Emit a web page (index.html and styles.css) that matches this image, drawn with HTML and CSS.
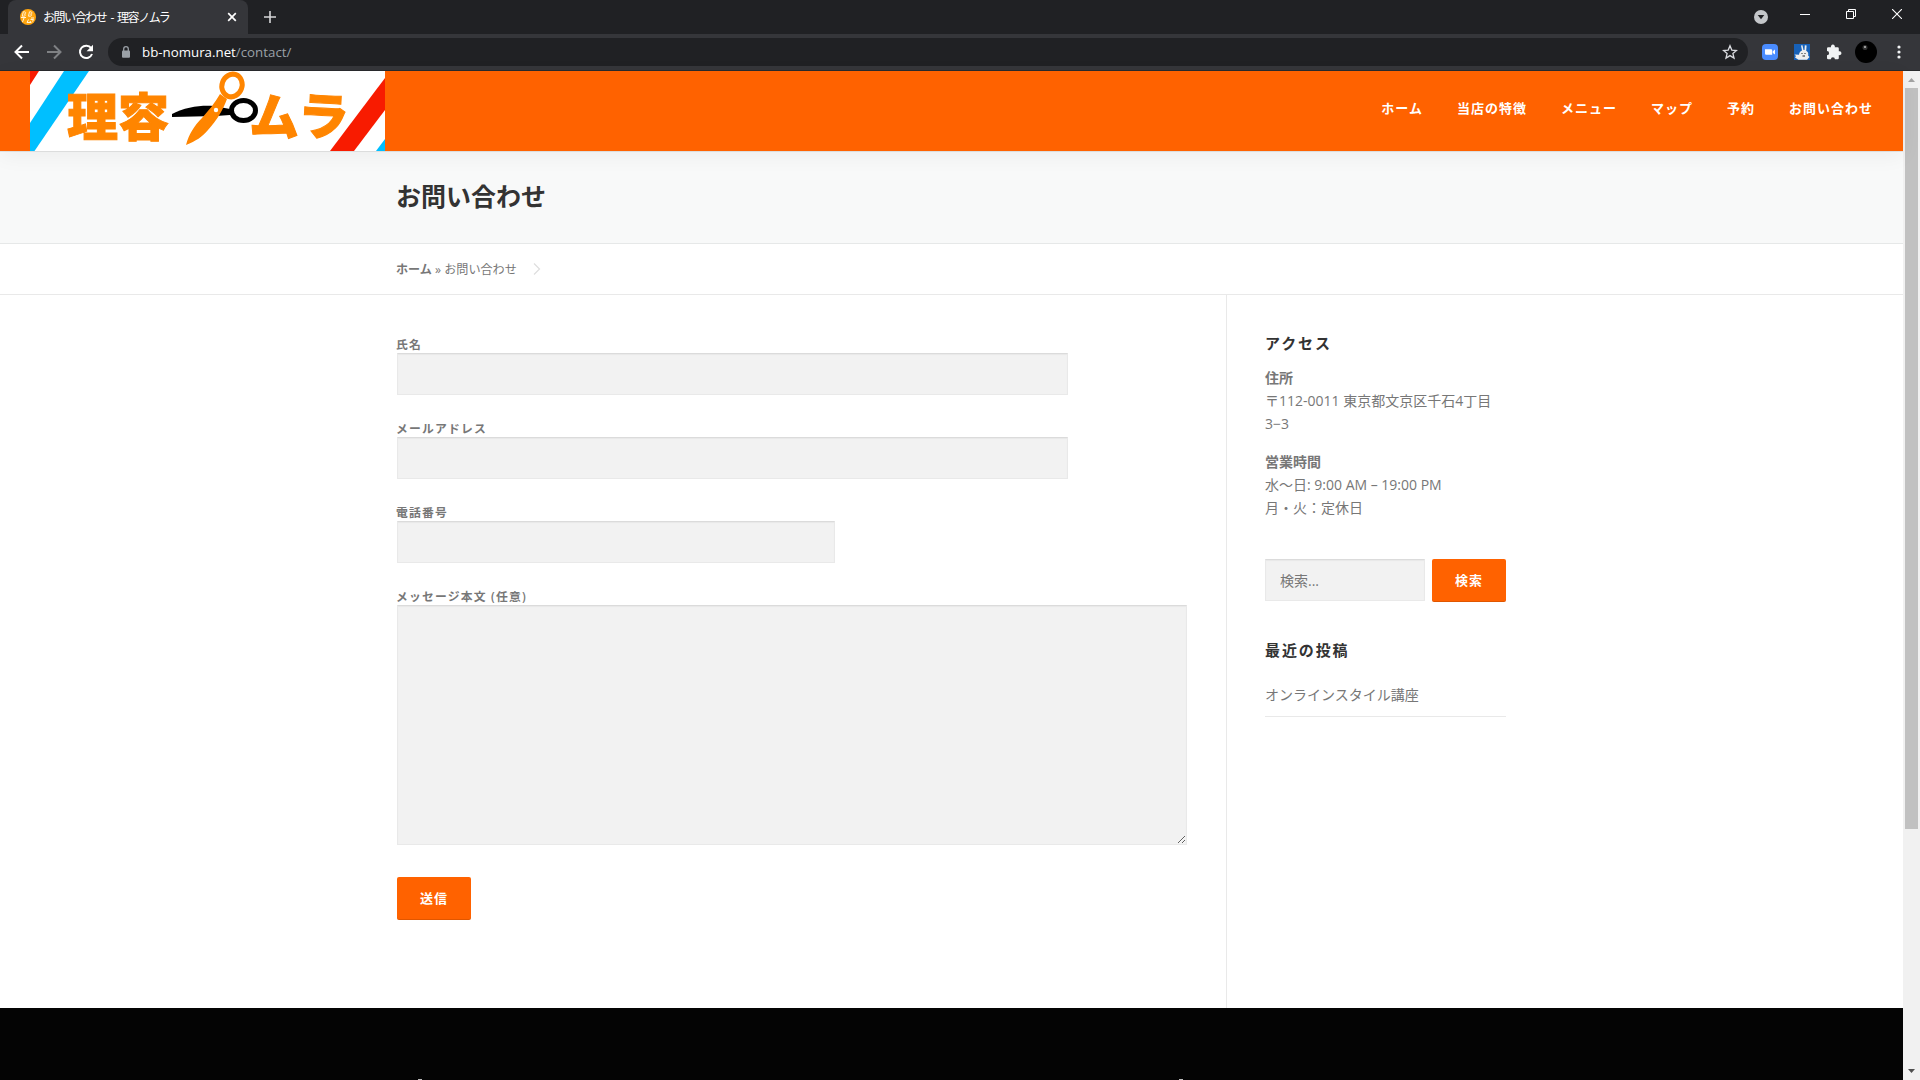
FILE: index.html
```html
<!DOCTYPE html>
<html lang="ja">
<head>
<meta charset="utf-8">
<title>お問い合わせ - 理容ノムラ</title>
<link rel="stylesheet" href="styles.css">
</head>
<body>
<div class="browser">
  <div class="tabstrip">
    <div class="tab">
      <svg class="favicon" width="16" height="16" viewBox="0 0 16 16"><circle cx="8" cy="8" r="8" fill="#ffa50f"/><g fill="none" stroke="#fff3d8" stroke-width="1"><path d="M3.300 2.800l-1 4.400h1.500c2 0 1.800-2 .6-2.100 1.700 0 1.700-2.200.2-2.300zM9.500 2.800l-1 4.400H10c2 0 1.800-2 .6-2.100 1.700 0 1.700-2.200.2-2.300z"/><path d="M1 8.500h5M4 9l-1.500 4M8.500 10.500L7 13.500h4M10 12l1.200 2M11 9h3M10.500 10.500h3l-1 2"/></g></svg>
      <span class="tab-title">お問い合わせ - 理容ノムラ</span>
      <svg class="tab-close" width="10" height="10" viewBox="0 0 10 10"><path d="M1.200 1.200l7.600 7.600M8.800 1.200L1.200 8.800" stroke="#fff" stroke-width="1.700"/></svg>
    </div>
    <svg class="new-tab" width="12" height="12" viewBox="0 0 12 12"><path d="M6 0v12M0 6h12" stroke="#d5d6d8" stroke-width="1.600"/></svg>
    <div class="window-controls">
      <svg width="14" height="14" viewBox="0 0 14 14"><circle cx="7" cy="7" r="7" fill="#c4c7ca"/><path d="M3.700 5h6.600L7 9.300z" fill="#202124"/></svg>
      <svg width="10" height="10" viewBox="0 0 10 10"><path d="M0 5.500h10" stroke="#fff"/></svg>
      <svg width="10" height="10" viewBox="0 0 10 10"><path d="M.5 2.500h7v7h-7zM2.500 2.500v-2h7v7h-2" fill="none" stroke="#fff"/></svg>
      <svg width="10" height="10" viewBox="0 0 10 10"><path d="M0 0l10 10M10 0L0 10" stroke="#fff" stroke-width="1.100"/></svg>
    </div>
  </div>
  <div class="toolbar">
    <div class="nav-buttons">
      <svg width="16" height="16" viewBox="0 0 16 16"><path d="M15 8H2M8 1.500L1.500 8 8 14.500" fill="none" stroke="#fff" stroke-width="2"/></svg>
      <svg width="16" height="16" viewBox="0 0 16 16"><path d="M1 8h13M8 1.500L14.500 8 8 14.500" fill="none" stroke="#7f8184" stroke-width="2"/></svg>
      <svg width="16" height="16" viewBox="0 0 16 16"><path d="M13.200 4.200A6.200 6.200 0 1 0 14 10" fill="none" stroke="#fff" stroke-width="2"/><path d="M15 .8v6.400H8.600z" fill="#fff"/></svg>
    </div>
    <div class="address">
      <svg width="10" height="12" viewBox="0 0 10 12"><rect x="1" y="4.500" width="8" height="7.300" rx="1" fill="#9aa0a6"/><path d="M2.700 5V3a2.300 2.300 0 0 1 4.600 0v2" fill="none" stroke="#9aa0a6" stroke-width="1.300"/></svg>
      <span class="url">bb-nomura.net<span class="url-path">/contact/</span></span>
      <svg class="star" width="16" height="16" viewBox="0 0 16 16"><path d="M8 1.800l1.800 4.300 4.700.4-3.600 3 1.100 4.600L8 11.600l-4 2.500 1.100-4.600-3.600-3 4.700-.4z" fill="none" stroke="#dadce0" stroke-width="1.300"/></svg>
    </div>
    <div class="extensions">
      <svg width="16" height="16" viewBox="0 0 16 16"><rect width="16" height="16" rx="4" fill="#4a8cff"/><path d="M3 5.200h6a1.200 1.200 0 0 1 1.200 1.200v4.400H4.200A1.200 1.200 0 0 1 3 9.600zM10.800 7.200L13 5.500v5l-2.200-1.600z" fill="#fff"/></svg>
      <svg width="16" height="16" viewBox="0 0 16 16"><rect width="16" height="16" fill="#1761b8"/><path d="M7 1.500l1.500-.3 1 4.800 1-.1.300-4.700 1.800.3-.4 5.300c2 1 2.400 3 1.900 4.700L15.500 13l-2.500 2.700H4.500L1 13.500l1-1.500-1.500-1.500 4.500.3c.2-2 1-3.500 3-4.300z" fill="#eee"/><path d="M8 9v1M11 9v1M8.500 12h2.500" stroke="#222"/></svg>
      <svg width="16" height="16" viewBox="0 0 16 16"><path d="M1 4.400A1.200 1.200 0 0 1 2.200 3.200H5a2 2 0 1 1 3.800 0h2.800a1.200 1.200 0 0 1 1.200 1.200v2.900a2 2 0 1 1 0 3.800v2.900a1.200 1.200 0 0 1-1.200 1.200H8.900a2 2 0 0 0-4 0H2.200A1.200 1.200 0 0 1 1 14v-2.700a2.100 2.100 0 0 0 0-4.200z" fill="#f1f3f4"/></svg>
      <svg class="avatar" width="22" height="22" viewBox="0 0 22 22"><circle cx="11" cy="11" r="11" fill="#000"/><circle cx="10" cy="6.500" r="2.500" fill="#333"/><circle cx="10" cy="6" r="1" fill="#bbb"/></svg>
      <svg class="kebab" width="4" height="14" viewBox="0 0 4 14"><g fill="#f1f3f4"><circle cx="2" cy="2" r="1.600"/><circle cx="2" cy="7" r="1.600"/><circle cx="2" cy="12" r="1.600"/></g></svg>
    </div>
  </div>
</div>

<div class="viewport">
  <div class="page">
    <header class="site-header">
      <svg class="logo" width="355" height="80" viewBox="0 0 355 80">
        <rect width="355" height="80" fill="#fff"/>
        <path d="M0 0h9L0 14z" fill="#f81b00"/>
        <path d="M34 0h25L4.500 80H0V52z" fill="#00bfff"/>
        <path d="M355 7v32L324 80h-24z" fill="#f81b00"/>
        <path d="M355 68v12h-9z" fill="#00bfff"/>
        <g class="logo-text">
          <text x="37" y="65" font-size="51" textLength="102">理容</text>
          <text x="220" y="64" font-size="50" transform="rotate(4 244 44)">ム</text>
          <text x="268" y="64" font-size="51" transform="rotate(3 293 46)">ラ</text>
        </g>
        <path d="M142 43c13-7 29-9 42-8l16 3v6l-14 1-44 1z" fill="#000"/>
        <ellipse cx="213.500" cy="39.500" rx="12" ry="10" fill="none" stroke="#000" stroke-width="5"/>
        <path d="M190 23l7 5c-4 11-10 21-19 31-6 7-12 11-22 15 3-11 8-19 16-27 8-9 12-14 18-24z" fill="#ff8500"/>
        <ellipse cx="202" cy="14.500" rx="10" ry="11.500" fill="none" stroke="#ff8500" stroke-width="5" transform="rotate(20 202 14.500)"/>
        <circle cx="186" cy="39" r="2.200" fill="#fff"/>
      </svg>
      <nav class="site-nav">
        <a>ホーム</a><a>当店の特徴</a><a>メニュー</a><a>マップ</a><a>予約</a><a>お問い合わせ</a>
      </nav>
    </header>
    <section class="page-title"><h1>お問い合わせ</h1></section>
    <div class="breadcrumb">
      <span><b>ホーム</b> » お問い合わせ</span>
      <svg width="8" height="12" viewBox="0 0 8 12"><path d="M1 .5L6.500 6 1 11.500" fill="none" stroke="#dedede" stroke-width="1.200"/></svg>
    </div>
    <div class="content">
      <main class="primary">
        <form class="contact-form">
          <label><span>氏名</span><input class="field" type="text"></label>
          <label><span>メールアドレス</span><input class="field" type="text"></label>
          <label><span>電話番号</span><input class="field field-short" type="text"></label>
          <label><span>メッセージ本文 (任意)</span><textarea class="field field-message"></textarea></label>
          <button class="button" type="button">送信</button>
        </form>
      </main>
      <aside class="sidebar">
        <h2>アクセス</h2>
        <p class="info"><b>住所</b><br>〒112-0011 東京都文京区千石4丁目<br>3−3</p>
        <p class="info"><b>営業時間</b><br>水〜日: 9:00 AM – 19:00 PM<br>月・火：定休日</p>
        <div class="search">
          <input class="field search-field" type="text" placeholder="検索...">
          <button class="button" type="button">検索</button>
        </div>
        <h2 class="recent-title">最近の投稿</h2>
        <ul class="recent"><li>オンラインスタイル講座</li></ul>
      </aside>
    </div>
    <footer class="site-footer"><i></i><i></i></footer>
  </div>
  <div class="scrollbar">
    <svg width="17" height="17" viewBox="0 0 17 17"><path d="M5 11h7L8.500 7z" fill="#a3a3a3"/></svg>
    <div class="thumb"></div>
    <svg width="17" height="17" viewBox="0 0 17 17"><path d="M5 6h7l-3.500 4z" fill="#505050"/></svg>
  </div>
</div>
</body>
</html>
```
FILE: styles.css
```css
* { box-sizing: border-box; }
html, body { height: 100%; overflow: hidden; }
body {
  margin: 0;
  display: flex;
  flex-direction: column;
  font: 14px/23px "Open Sans", "Noto Sans CJK JP", sans-serif;
  color: #777;
  background: #fff;
}
svg { display: block; flex: none; }

/* Browser chrome */
.browser { flex: none; height: 71px; background: #35363a; border-bottom: 1px solid #292a2d; }
.tabstrip { height: 34px; display: flex; align-items: flex-start; background: #202124; padding-left: 8px; }
.tab {
  width: 240px; height: 34px;
  display: flex; align-items: center;
  padding: 0 11px 0 12px;
  border-radius: 8px 8px 0 0;
  background: #35363a;
}
.tab-title { margin-left: 7px; flex: 1; font-size: 12px; color: #fff; letter-spacing: -1.450px; word-spacing: 2.500px; white-space: nowrap; }
.new-tab { margin: 11px 0 0 16px; }
.window-controls { margin-left: auto; display: flex; padding-right: 18px; }
.window-controls svg { margin: 9px 0 0 36px; }
.window-controls svg:first-child { margin: 10px -4px 0 0; }
.toolbar { height: 36px; display: flex; align-items: center; padding-left: 14px; }
.nav-buttons { display: flex; gap: 16px; width: 94px; }
.address {
  width: 1640px; height: 28px;
  display: flex; align-items: center;
  padding: 0 10px 0 13px;
  border-radius: 14px;
  background: #202124;
}
.url { margin-left: 11px; flex: 1; font-size: 13.300px; color: #fff; white-space: nowrap; }
.url-path { color: #9aa0a6; }
.extensions { display: flex; align-items: center; gap: 16px; margin-left: 14px; }
.avatar { margin-left: -3px; }
.kebab { margin-left: 4px; }

/* Site */
.viewport { flex: 1; min-height: 0; display: flex; }
.page { flex: 1; min-width: 0; display: flex; flex-direction: column; }
.site-header {
  position: relative; z-index: 1;
  flex: none; height: 80px;
  display: flex; justify-content: space-between; align-items: flex-start;
  padding: 0 30px;
  background: #ff6200;
  box-shadow: 0 5px 20px rgba(0, 0, 0, .05), 0 1px 0 rgba(0, 0, 0, .08);
}
.logo { overflow: visible; }
.logo-text { fill: #ff8500; stroke: #ff8500; stroke-width: 1px; font-family: "Noto Sans CJK JP", sans-serif; font-weight: 900; }
.site-nav { display: flex; gap: 34px; padding-top: 26px; }
.site-nav a { font-size: 13px; font-weight: 700; letter-spacing: 1px; color: #fff; white-space: nowrap; }
.page-title { flex: none; height: 93px; padding: 23px 396px 0; background: #f8f9f9; border-bottom: 1px solid #e6e8e8; }
h1 { margin: 0; font-size: 25px; line-height: 44px; font-weight: 600; color: #333; }
.breadcrumb {
  flex: none; height: 51px;
  display: flex; align-items: center; gap: 16px;
  padding-left: 396px;
  font-size: 12.100px;
  border-bottom: 1px solid #e9e9e9;
}
.content { flex: none; height: 713px; display: flex; padding-left: 397px; }
.primary { width: 830px; padding: 40px 39px 0 0; border-right: 1px solid #e9e9e9; }
.contact-form label { display: block; margin-bottom: 24px; }
.contact-form label span { display: block; height: 18px; margin-left: -1px; font-size: 11.800px; line-height: 18px; letter-spacing: 1.200px; font-weight: 600; }
.field {
  display: block;
  width: 671px; height: 42px;
  margin: 0; padding: 0 14px;
  border: 1px solid #e9e9e9; border-top-color: #dbdbdb;
  border-radius: 0; outline: 0;
  background: #f2f2f2;
  box-shadow: inset 0 1px 1px rgba(0, 0, 0, .04);
  font: inherit;
}
.field-short { width: 438px; }
.field-message { width: 790px; height: 240px; resize: both; }
.button {
  display: block;
  width: 74px; height: 43px; padding: 0;
  border: 0; border-radius: 2px;
  background: #ff6200;
  box-shadow: inset 0 -1px 0 rgba(0, 0, 0, .12);
  color: #fff;
  font: 700 13px/43px "Open Sans", "Noto Sans CJK JP", sans-serif;
  letter-spacing: 1px;
}
.contact-form .button { margin-top: 32px; }
.sidebar { width: 279px; padding: 36px 0 0 38px; }
h2 { margin: 0; font-size: 15px; line-height: 24px; font-weight: 600; letter-spacing: 1.900px; color: #333; }
.info { margin: 11px 0 15px; white-space: nowrap; }
.info + .info { margin: 0; }
.info b, .breadcrumb b { font-weight: 600; }
.search { display: flex; justify-content: space-between; margin-top: 40px; }
.search-field { width: 160px; font-size: 14px; }
.search-field::placeholder { color: #777; opacity: 1; }
.recent-title { margin-top: 36px; }
.recent { list-style: none; margin: 21px 0 0; padding: 0 0 10px; border-bottom: 1px solid #e9e9e9; }
.site-footer { flex: 1; display: flex; align-items: flex-end; gap: 757px; padding-left: 418px; background: #040404; }
.site-footer i { width: 4px; height: 1px; background: #bbb; }
.scrollbar { width: 17px; display: flex; flex-direction: column; background: #f1f1f1; }
.thumb { width: 13px; height: 741px; margin: 0 2px auto; background: #c1c1c1; }
```
